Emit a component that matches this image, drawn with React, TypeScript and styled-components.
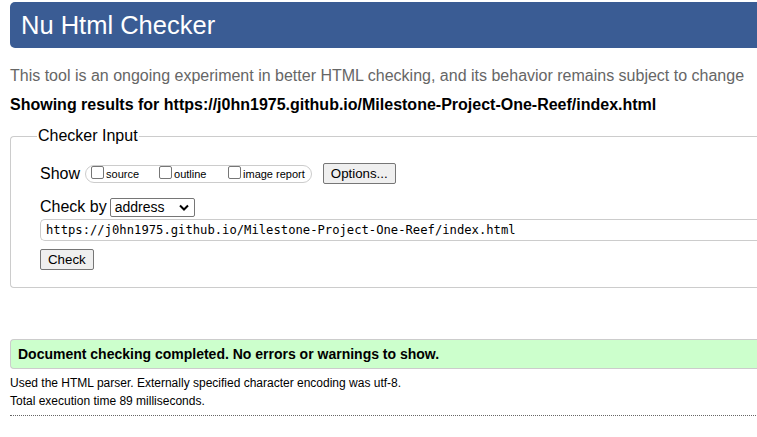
import React from "react";
import styled, { createGlobalStyle } from "styled-components";

const Global = createGlobalStyle`
  html, body { margin: 0; padding: 0; background: #fff; overflow: hidden; }
  body { font-family: "Liberation Sans", Arial, sans-serif; color: #000; }
`;

const Page = styled.div`
  width: 820px;
  padding: 2px 0 0 10px;
  display: flex;
  flex-direction: column;
`;

const Header = styled.h1`
  margin: 0;
  height: 46px;
  box-sizing: border-box;
  background: #3a5c94;
  border-radius: 5px 0 0 5px;
  color: #fff;
  font-weight: normal;
  font-size: 25.5px;
  line-height: 46px;
  padding-left: 11px;
`;

const Intro = styled.p`
  margin: 18px 0 0;
  color: #666;
  font-size: 16px;
  line-height: 20px;
`;

const Results = styled.h2`
  margin: 10px 0 0;
  font-size: 16px;
  font-weight: bold;
  line-height: 18px;
`;

const Fieldset = styled.fieldset`
  margin: 13px 0 0;
  padding: 10px 0 17px 29px;
  border: 1px solid #ccc;
  border-right: none;
  border-radius: 4px 0 0 4px;
  min-width: 0;
`;

const Legend = styled.legend`
  padding: 0 1px;
  margin-left: -3px;
  font-size: 16px;
  color: #000;
`;

const Row = styled.div<{ $gap?: number; $mt?: number }>`
  display: flex;
  align-items: center;
  gap: ${(p) => p.$gap ?? 4}px;
  margin-top: ${(p) => p.$mt ?? 0}px;
`;

const Label = styled.span`
  font-size: 16px;
  line-height: 20px;
`;

const CheckGroup = styled.div`
  display: flex;
  align-items: center;
  height: 18px;
  box-sizing: border-box;
  border: 1px solid #ccc;
  border-radius: 9px;
  padding: 0 6px 0 5px;
`;

const CheckItem = styled.label<{ $w: number }>`
  display: flex;
  align-items: center;
  width: ${(p) => p.$w}px;
  font-size: 11px;
  white-space: nowrap;
  &:last-child { width: auto; }
`;

const Box = styled.span`
  width: 13px;
  height: 13px;
  box-sizing: border-box;
  border: 1px solid #767676;
  border-radius: 2px;
  background: #fff;
  margin-right: 2px;
  position: relative;
  top: -1px;
`;

const Button = styled.button<{ $ml?: number }>`
  font-family: "Liberation Sans", Arial, sans-serif;
  font-size: 13.3px;
  height: 21px;
  margin-left: ${(p) => p.$ml ?? 0}px;
  padding: 0 7px;
  background: #efefef;
  border: 1px solid #767676;
  border-radius: 2px;
  color: #000;
  line-height: 19px;
`;

const Select = styled.div`
  width: 85px;
  height: 19px;
  box-sizing: border-box;
  border: 1px solid #767676;
  border-radius: 2px;
  display: flex;
  align-items: center;
  justify-content: space-between;
  padding: 0 5px 0 4px;
  font-size: 14px;
`;

const UrlInput = styled.div`
  margin-top: 2px;
  height: 22px;
  box-sizing: border-box;
  border: 1px solid #ccc;
  border-right: none;
  border-radius: 5px 0 0 5px;
  padding-left: 5px;
  display: flex;
  align-items: center;
  font-family: "DejaVu Sans Mono", "Liberation Mono", monospace;
  font-size: 12.2px;
  color: #000;
`;

const Success = styled.p`
  margin: 51px 0 0;
  height: 30px;
  box-sizing: border-box;
  background: #ccffcc;
  border: 1px solid #ccc;
  border-right: none;
  border-radius: 4px 0 0 4px;
  padding-left: 7px;
  display: flex;
  align-items: center;
  font-size: 14px;
  font-weight: bold;
`;

const Detail = styled.p<{ $mt: number }>`
  margin: ${(p) => p.$mt}px 0 0;
  font-size: 12px;
  line-height: 14px;
  color: #000;
`;

const Rule = styled.hr`
  margin: 7px 0 0;
  border: none;
  border-top: 1px dotted #666;
  height: 0;
`;

export default function App() {
  return (
    <>
      <Global />
      <Page>
        <Header>Nu Html Checker</Header>
        <Intro>
          This tool is an ongoing experiment in better HTML checking, and its behavior remains subject to change
        </Intro>
        <Results>Showing results for https://j0hn1975.github.io/Milestone-Project-One-Reef/index.html</Results>
        <Fieldset>
          <Legend>Checker Input</Legend>
          <Row $gap={5} $mt={8}>
            <Label>Show</Label>
            <CheckGroup>
              <CheckItem $w={68}><Box />source</CheckItem>
              <CheckItem $w={69}><Box />outline</CheckItem>
              <CheckItem $w={80}><Box />image report</CheckItem>
            </CheckGroup>
            <Button $ml={6}>Options...</Button>
          </Row>
          <Row $gap={3} $mt={13}>
            <Label>Check by</Label>
            <Select>
              address
              <svg width="10" height="7" viewBox="0 0 10 7">
                <path d="M1 1.5 L5 5.5 L9 1.5" stroke="#000" strokeWidth="2" fill="none" />
              </svg>
            </Select>
          </Row>
          <UrlInput>https://j0hn1975.github.io/Milestone-Project-One-Reef/index.html</UrlInput>
          <Row $mt={8}>
            <Button>Check</Button>
          </Row>
        </Fieldset>
        <Success>Document checking completed. No errors or warnings to show.</Success>
        <Detail $mt={7}>Used the HTML parser. Externally specified character encoding was utf-8.</Detail>
        <Detail $mt={4}>Total execution time 89 milliseconds.</Detail>
        <Rule />
      </Page>
    </>
  );
}
